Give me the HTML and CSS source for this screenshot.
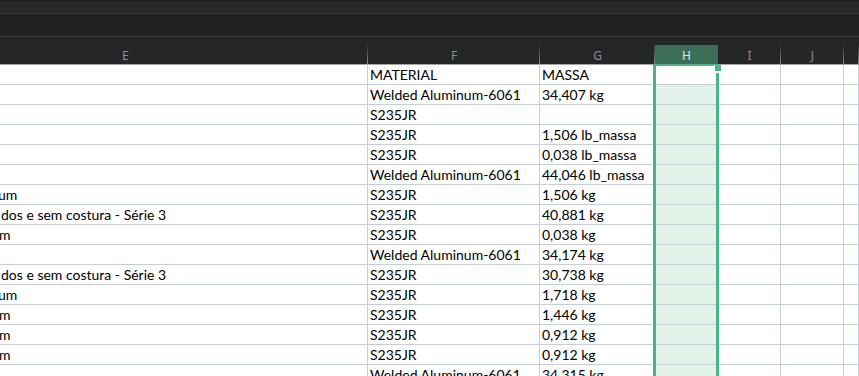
FILE: index.html
```html
<!DOCTYPE html>
<html lang="pt">
<head>
    <meta charset="UTF-8">
    <title>Planilha</title>
    <link rel="stylesheet" href="styles.css">
</head>
<body>
    <div class="ribbon"></div>
    <div class="formula-bar"></div>

    <div class="sheet">
        <div class="row heads">
            <div class="head col-e">E</div>
            <div class="head">F</div>
            <div class="head">G</div>
            <div class="head active">H</div>
            <div class="head">I</div>
            <div class="head">J</div>
            <div class="head"></div>
        </div>

        <div class="row">
            <div class="cell"></div>
            <div class="cell">MATERIAL</div>
            <div class="cell">MASSA</div>
            <div class="cell sel first"></div>
            <div class="cell"></div><div class="cell"></div><div class="cell"></div>
        </div>
        <div class="row">
            <div class="cell"></div>
            <div class="cell">Welded Aluminum-6061</div>
            <div class="cell">34,407 kg</div>
            <div class="cell sel"></div>
            <div class="cell"></div><div class="cell"></div><div class="cell"></div>
        </div>
        <div class="row">
            <div class="cell"></div>
            <div class="cell">S235JR</div>
            <div class="cell"></div>
            <div class="cell sel"></div>
            <div class="cell"></div><div class="cell"></div><div class="cell"></div>
        </div>
        <div class="row">
            <div class="cell"></div>
            <div class="cell">S235JR</div>
            <div class="cell">1,506 lb_massa</div>
            <div class="cell sel"></div>
            <div class="cell"></div><div class="cell"></div><div class="cell"></div>
        </div>
        <div class="row">
            <div class="cell"></div>
            <div class="cell">S235JR</div>
            <div class="cell">0,038 lb_massa</div>
            <div class="cell sel"></div>
            <div class="cell"></div><div class="cell"></div><div class="cell"></div>
        </div>
        <div class="row">
            <div class="cell"></div>
            <div class="cell">Welded Aluminum-6061</div>
            <div class="cell">44,046 lb_massa</div>
            <div class="cell sel"></div>
            <div class="cell"></div><div class="cell"></div><div class="cell"></div>
        </div>
        <div class="row">
            <div class="cell cut"><span class="clip">um</span></div>
            <div class="cell">S235JR</div>
            <div class="cell">1,506 kg</div>
            <div class="cell sel"></div>
            <div class="cell"></div><div class="cell"></div><div class="cell"></div>
        </div>
        <div class="row">
            <div class="cell cut"><span class="clip-d">dos e sem costura - Série 3</span></div>
            <div class="cell">S235JR</div>
            <div class="cell">40,881 kg</div>
            <div class="cell sel"></div>
            <div class="cell"></div><div class="cell"></div><div class="cell"></div>
        </div>
        <div class="row">
            <div class="cell cut"><span class="clip-m">m</span></div>
            <div class="cell">S235JR</div>
            <div class="cell">0,038 kg</div>
            <div class="cell sel"></div>
            <div class="cell"></div><div class="cell"></div><div class="cell"></div>
        </div>
        <div class="row">
            <div class="cell"></div>
            <div class="cell">Welded Aluminum-6061</div>
            <div class="cell">34,174 kg</div>
            <div class="cell sel"></div>
            <div class="cell"></div><div class="cell"></div><div class="cell"></div>
        </div>
        <div class="row">
            <div class="cell cut"><span class="clip-d">dos e sem costura - Série 3</span></div>
            <div class="cell">S235JR</div>
            <div class="cell">30,738 kg</div>
            <div class="cell sel"></div>
            <div class="cell"></div><div class="cell"></div><div class="cell"></div>
        </div>
        <div class="row">
            <div class="cell cut"><span class="clip">um</span></div>
            <div class="cell">S235JR</div>
            <div class="cell">1,718 kg</div>
            <div class="cell sel"></div>
            <div class="cell"></div><div class="cell"></div><div class="cell"></div>
        </div>
        <div class="row">
            <div class="cell cut"><span class="clip-m">m</span></div>
            <div class="cell">S235JR</div>
            <div class="cell">1,446 kg</div>
            <div class="cell sel"></div>
            <div class="cell"></div><div class="cell"></div><div class="cell"></div>
        </div>
        <div class="row">
            <div class="cell cut"><span class="clip-m">m</span></div>
            <div class="cell">S235JR</div>
            <div class="cell">0,912 kg</div>
            <div class="cell sel"></div>
            <div class="cell"></div><div class="cell"></div><div class="cell"></div>
        </div>
        <div class="row">
            <div class="cell cut"><span class="clip-m">m</span></div>
            <div class="cell">S235JR</div>
            <div class="cell">0,912 kg</div>
            <div class="cell sel"></div>
            <div class="cell"></div><div class="cell"></div><div class="cell"></div>
        </div>
        <div class="row">
            <div class="cell"></div>
            <div class="cell">Welded Aluminum-6061</div>
            <div class="cell">34,315 kg</div>
            <div class="cell sel"></div>
            <div class="cell"></div><div class="cell"></div><div class="cell"></div>
        </div>

        <div class="selection"></div>
        <div class="fill-handle"></div>
    </div>
</body>
</html>
```

FILE: styles.css
```css
:root {
    --grid: #c8cdda;
    --sel: #4cb386;
    --sel-fill: #e3f2e9;
}

body {
    margin: 0;
    overflow: hidden;
    background: #ffffff;
    font-family: Lato, "Open Sans", sans-serif;
}

.ribbon {
    height: 12px;
    background: #28292b;
    border-top: 1px solid #1c1c1d;
    border-bottom: 1px solid #3d3d3d;
}

.formula-bar {
    height: 22px;
    background: #212121;
    border-bottom: 1px solid #3d3d3d;
}

.sheet {
    position: relative;
}

.row {
    display: grid;
    grid-template-columns: 368px 172px 115px 63px 63px 63px 1fr;
    height: 20px;
}

.row.heads {
    height: 27px;
    background: #252628;
    border-bottom: 1px solid #a6a6a6;
}

.head {
    font-family: "Noto Sans", sans-serif;
    font-size: 12px;
    color: #8f8f8f;
    text-align: center;
    padding-top: 10px;
    box-sizing: border-box;
    background: linear-gradient(to bottom, rgba(150, 150, 150, 0) 25%, #8e8e8e) no-repeat right top / 1px 100%;
}

.head.col-e {
    text-align: left;
    padding-left: 122px;
}

.head.active {
    color: #dce9e1;
    background: linear-gradient(to bottom, #252628 8px, #3d6e57 8px);
}

.cell {
    box-sizing: border-box;
    border-right: 1px solid var(--grid);
    border-bottom: 1px solid var(--grid);
    font-size: 14px;
    line-height: 19px;
    color: #000;
    padding-left: 2px;
    white-space: nowrap;
    overflow: hidden;
}

.cell.cut {
    padding-left: 0;
}

.clip { margin-left: -2px; }
.clip-d { margin-left: 1px; }
.clip-m { margin-left: -1px; }

.cell.sel {
    background: var(--sel-fill);
}

.cell.sel.first {
    background: #ffffff;
}

.selection {
    position: absolute;
    left: 653px;
    top: 27px;
    width: 60px;
    height: 400px;
    border: 3px solid var(--sel);
    border-bottom: none;
    border-top-width: 2px;
}

.fill-handle {
    position: absolute;
    left: 714px;
    top: 28px;
    width: 6px;
    height: 6px;
    background: var(--sel);
    border-bottom: 2px solid #ffffff;
    border-left: 1px solid #ffffff;
}
```
